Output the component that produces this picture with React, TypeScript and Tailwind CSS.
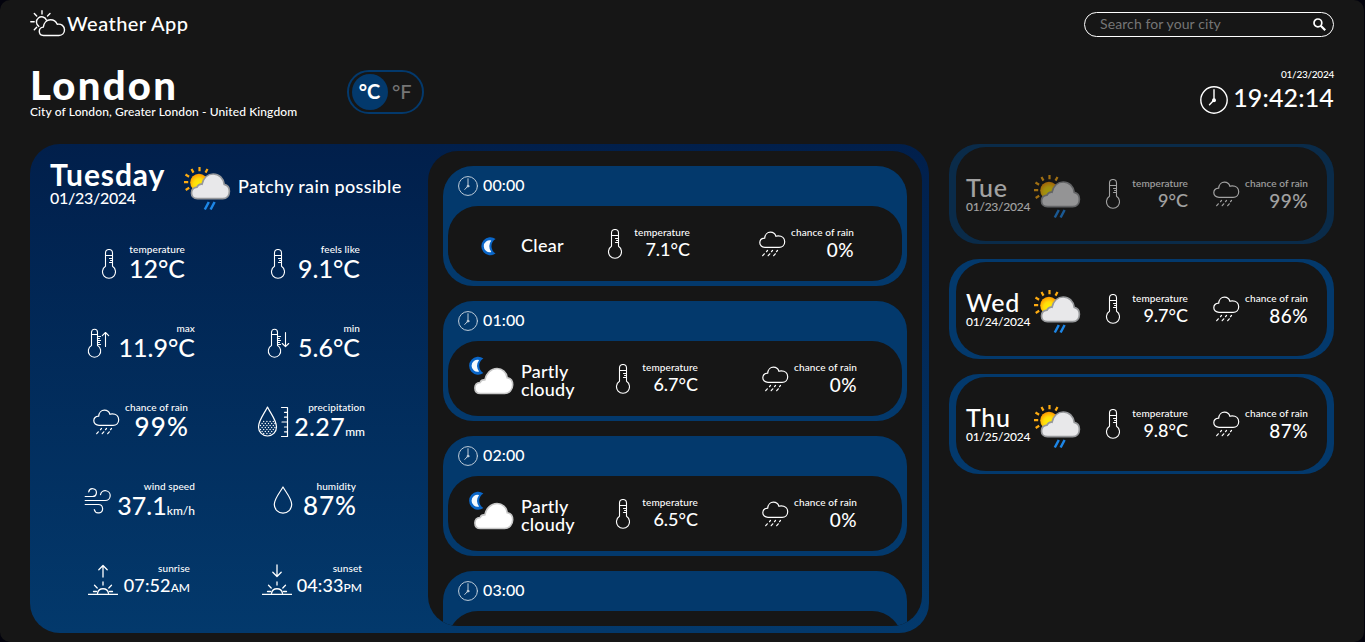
import React from "react";

type P = { className?: string };
const line = { fill: "none", stroke: "currentColor", strokeLinecap: "round", strokeLinejoin: "round" } as const;

function Logo() {
  return (
    <svg className="h-[28px] w-[36px] shrink-0" viewBox="0 0 36 28" {...line} strokeWidth={1.4}>
      <path d="M13.500 25.500c-2.600 0-4.200-1.900-4.200-4.200 0-2.300 1.500-4 4-4.200 0.500-4.200 3.300-7.300 7.200-7.300 3.200 0 5.600 1.800 6.700 4.400 4.200-0.700 7.300 2 7.300 5.600 0 3.300-2.300 5.700-5.500 5.700z" />
      <path d="M8.800 16.400a5.200 5.200 0 1 1 7.700-6.200" />
      <path d="M12 0.800v3.200M4.300 3.500l2.400 2.500M20 3.500l-2.500 2.500M0.800 11.800h3.400M4.300 19.700l2.400-2.500" />
    </svg>
  );
}

function Clock({ className = "", w = 1.4 }: P & { w?: number }) {
  return (
    <svg className={`shrink-0 ${className}`} viewBox="0 0 28 28" {...line} strokeWidth={w}>
      <circle cx="14" cy="14" r="13.200" />
      <path d="M14 3.800V14l-4.500 4.800" />
      <circle cx="14" cy="14.200" r="1.300" fill="currentColor" />
    </svg>
  );
}

function Thermometer({ className = "" }: P) {
  return (
    <svg className={`h-[31px] w-[15px] shrink-0 ${className}`} viewBox="0 0 15 31" {...line} strokeWidth={1.1}>
      <path d="M4.500 17.300V4a3.500 3.500 0 0 1 7 0v13.300a6.500 6.500 0 1 1-7 0z" />
      <path d="M4.700 6.500h6.600M8.500 9.500h3M9.500 11.500h2M8.500 13.500h3" />
    </svg>
  );
}

function ThermometerArrow({ down }: { down?: boolean }) {
  return (
    <svg className="h-[31px] w-[23px] shrink-0" viewBox="0 0 23 31" {...line} strokeWidth={1.1}>
      <path d="M4.500 17.600V4.200a3 3 0 0 1 6 0v13.400a6.200 6.200 0 1 1-6 0z" />
      <path d="M4.700 6.500h5.600M10.500 8.500h3M10.500 10.500h2M10.500 12.500h3M10.500 14.500h2M10.500 16.500h3" />
      {down ? <path d="M18.500 4.500v14M15.300 15.500l3.200 3.200 3.200-3.200" /> : <path d="M18.500 4.500v14M15.300 7.700l3.200-3.200 3.200 3.200" />}
    </svg>
  );
}

function RainCloud({ className = "" }: P) {
  return (
    <svg className={`h-[26px] w-[27px] shrink-0 ${className}`} viewBox="0 0 27 26" {...line} strokeWidth={1.2}>
      <path d="M6 16.300c-3 0-5.200-2-5.200-4.500 0-2.700 2-4.500 4.900-4.700C6 3.700 8.300 1.200 11.400 1.200c2.800 0 4.800 1.600 5.500 4.100 0.700-0.400 1.500-0.500 2.300-0.500 3.800 0 6.500 2.400 6.500 5.900 0 3.300-2.400 5.600-5.600 5.600z" />
      <path d="M8.500 19.500l-1 1.200M13.500 19.500l-1 1.200M18.500 19.500l-1 1.200M5.300 22.800l-1.600 1.900M10.800 22.800l-1.600 1.900M16.300 22.800l-1.600 1.900" />
    </svg>
  );
}

function DropRuler() {
  const dots: [number, number][] = [];
  for (let r = 0; r < 7; r++)
    for (let c = 0; c < 6; c++) {
      const x = 3 + c * 3.2 + (r % 2 ? 1.6 : 0);
      const y = 15.5 + r * 2;
      if (Math.hypot(x - 10, y - 20.5) < 8) dots.push([x, y]);
    }
  return (
    <svg className="h-[32px] w-[32px] shrink-0" viewBox="0 0 32 32" {...line} strokeWidth={1.2}>
      <path d="M10.500 1c2.500 5.500 9 13 9 20a9 9 0 0 1-18 0C1.500 14 8 6.500 10.500 1z" />
      {dots.map(([x, y], i) => <circle key={i} cx={x + 0.5} cy={y} r="0.7" fill="currentColor" stroke="none" />)}
      <path d="M24.500 1.500h6v29h-6M27.500 6.300h3M27.500 11.200h3M25 16h5.500M27.500 21h3M27.500 25.800h3" />
    </svg>
  );
}

function Wind() {
  return (
    <svg className="h-[27px] w-[27px] shrink-0" viewBox="0 0 27 27" {...line} strokeWidth={1.2}>
      <path d="M1.200 9.500h7.300a3.900 3.900 0 1 0-3.800-4.700" />
      <path d="M1.200 13.500h20a4.900 4.900 0 1 0-4.700-5.900" />
      <path d="M1.200 17.500h13.100a4.200 4.200 0 1 1-4 5.200" />
    </svg>
  );
}

function Drop() {
  return (
    <svg className="h-[28px] w-[20px] shrink-0" viewBox="0 0 20 28" {...line} strokeWidth={1.2}>
      <path d="M10 1c2.500 4.700 8.700 11.500 8.700 17.500a8.700 8.700 0 0 1-17.400 0C1.300 12.500 7.500 5.700 10 1z" />
    </svg>
  );
}

function Horizon({ down }: { down?: boolean }) {
  return (
    <svg className="h-[31px] w-[30px] shrink-0" viewBox="0 0 30 31" {...line} strokeWidth={1.3}>
      {down ? <path d="M15 1v11M10.800 8.300l4.200 4.200 4.200-4.200" /> : <path d="M15 1.500v11.500M10.800 5.700L15 1.500l4.200 4.200" />}
      <path d="M15 18v3M6.500 21.300l2.700 2.700M23.500 21.300L20.800 24M5.500 27.500h3M21.500 27.500h3M9.500 29.300a5.600 5.600 0 0 1 11 0" />
      <path d="M0.500 30.300h29" />
    </svg>
  );
}

function SunRain() {
  return (
    <svg className="h-[45px] w-[48px] shrink-0" viewBox="0 0 48 45">
      <defs>
        <radialGradient id="sun" cx="0.5" cy="0.6" r="0.55">
          <stop offset="0" stopColor="#fff200" />
          <stop offset="0.55" stopColor="#ffdc0c" />
          <stop offset="1" stopColor="#ff9f00" />
        </radialGradient>
      </defs>
      <g stroke="#fdab11" strokeWidth="2.2">
        <path d="M16.500 1v4.200M8.500 3l2 3.600M24.500 3l-2 3.600M2.500 8.500l3.600 2.200M1 16.200h4.200M2.700 24l3.500-2.200" />
      </g>
      <circle cx="16" cy="16.500" r="8.800" fill="url(#sun)" />
      <path
        d="M14.500 32.700c-4 0-6-2.600-6-5.700 0-3.200 2.300-5.500 5.500-5.800 0.800-2 2.700-3.300 5-3 1.400-6 5.700-10.200 11.200-10.200 5.900 0 10.300 4.400 11 10.400 3.500 0.700 5.200 3.400 5.200 6.900 0 4.300-2.700 7.400-6.700 7.400z"
        fill="#e8e8ea" stroke="#96989b" strokeWidth="1.700"
      />
      <path d="M25.800 36l-4 7.500M31.600 36l-4 7.500" stroke="#1d86e6" strokeWidth="2.500" />
    </svg>
  );
}

function MoonShape({ x, y }: { x: number; y: number }) {
  return (
    <g transform={`translate(${x} ${y})`}>
      <path d="M14.600 1.700A9 9 0 1 0 14.600 16.300A8.500 8.500 0 0 1 14.600 1.700z" fill="#0a66c8" />
      <path d="M10.300 3.200a6 6 0 1 0 0 11.600A10 10 0 0 1 10.300 3.200z" fill="#f4faff" />
    </g>
  );
}

function Moon() {
  return (
    <svg className="h-[45px] w-[48px] shrink-0" viewBox="0 0 48 45">
      <MoonShape x={13} y={16.3} />
    </svg>
  );
}

function MoonCloud() {
  return (
    <svg className="h-[45px] w-[48px] shrink-0" viewBox="0 0 48 45">
      <MoonShape x={0.8} y={0.8} />
      <path
        d="M12.500 37.500c-3.700 0-5.600-2.500-5.600-5.500 0-3.100 2.200-5.300 5.300-5.500 0.600-1.900 2.500-2.900 4.600-2.600C18 17.500 22.800 12.500 29 12.500c5.400 0 9.600 3.800 10.200 9.200 3.500 0.600 5.500 3.500 5.500 7.100 0 5-3.500 8.700-8 8.700z"
        fill="#ffffff" stroke="#c8c8c8" strokeWidth="1.600"
      />
    </svg>
  );
}

function Search() {
  return (
    <svg className="h-[13px] w-[13px] shrink-0" viewBox="0 0 13 13" fill="none" stroke="white" strokeWidth="1.7">
      <circle cx="4.900" cy="4.900" r="3.900" />
      <path d="M7.700 7.700l4.500 4.500" strokeWidth="2.2" />
    </svg>
  );
}

function Metric(p: { icon: React.ReactNode; label: string; value: string; unit?: string; cell: string; text: string; size?: string }) {
  return (
    <div className={`flex h-[79px] items-start ${p.cell}`}>
      {p.icon}
      <div className={`flex flex-col items-end whitespace-nowrap ${p.text}`}>
        <div className="text-[10px] leading-[12px] tracking-[0.1px]">{p.label}</div>
        <div className={p.size ?? "text-[25px] leading-[27px]"}>
          {p.value}
          {p.unit && <span className="text-[12px] tracking-normal">{p.unit}</span>}
        </div>
      </div>
    </div>
  );
}

function SmallMetric({ label, value, size }: { label: string; value: string; size: string }) {
  return (
    <div className="flex flex-col items-end pb-[1px] whitespace-nowrap">
      <div className="text-[10px] leading-[13px] tracking-[0.1px]">{label}</div>
      <div className={`leading-[21px] ${size}`}>{value}</div>
    </div>
  );
}

const tempSize = "text-[18px]";
const rainSize = "text-[19px] tracking-[0.5px]";

const hours = [
  { time: "00:00", text: "Clear", temp: "7.1°C", clear: true },
  { time: "01:00", text: "Partly cloudy", temp: "6.7°C" },
  { time: "02:00", text: "Partly cloudy", temp: "6.5°C" },
  { time: "03:00", text: "Partly cloudy", temp: "6.3°C" },
];

function Hour({ h }: { h: (typeof hours)[number] }) {
  return (
    <div className="h-[120px] shrink-0 rounded-[30px] bg-[#03396c] px-[5px] pb-[5px]">
      <div className="flex h-[40px] items-center pb-[1px] pl-[10px]">
        <Clock className="h-[20px] w-[20px] opacity-75" w={1.4} />
        <div className="ml-[5px] pb-[1px] text-[16px] leading-[20px] tracking-[0.1px]">{h.time}</div>
      </div>
      <div className="flex h-[75px] items-center rounded-[30px] bg-[#161616] pl-[20px]">
        {h.clear ? <Moon /> : <MoonCloud />}
        <div className={h.clear ? "ml-[5px] w-[86px] pt-[3px] text-[18px] leading-[18px] tracking-[0.3px]" : "ml-[5px] w-[94px] pt-[2px] pr-[30px] text-[18px] leading-[18px] tracking-[0.2px]"}>{h.text}</div>
        <Thermometer className="mt-[1px]" />
        <div className="flex w-[68px] justify-end"><SmallMetric label="temperature" value={h.temp} size={tempSize} /></div>
        <RainCloud className={h.clear ? "ml-[69px]" : "ml-[64px]"} />
        <div className="flex w-[68px] justify-end"><SmallMetric label="chance of rain" value="0%" size={rainSize} /></div>
      </div>
    </div>
  );
}

const days = [
  { day: "Tue", date: "01/23/2024", temp: "9°C", rain: "99%", past: true },
  { day: "Wed", date: "01/24/2024", temp: "9.7°C", rain: "86%" },
  { day: "Thu", date: "01/25/2024", temp: "9.8°C", rain: "87%" },
];

function Day({ d }: { d: (typeof days)[number] }) {
  return (
    <div className={`h-[100px] rounded-[30px] bg-[#03396c] px-[7px] py-[3px] ${d.past ? "opacity-60" : ""}`}>
      <div className="flex h-[94px] items-center rounded-[30px] bg-[#161616] pl-[10px]">
        <div className="w-[67px] pb-[2px]">
          <div className="text-[25px] leading-[26px] tracking-[0.7px]">{d.day}</div>
          <div className="text-[12px] leading-[13px] tracking-[-0.25px]">{d.date}</div>
        </div>
        <div className="pt-[4px]"><SunRain /></div>
        <Thermometer className="ml-[24px]" />
        <div className="flex w-[68px] justify-end"><SmallMetric label="temperature" value={d.temp} size={tempSize} /></div>
        <RainCloud className="ml-[25px]" />
        <div className="flex w-[68px] justify-end"><SmallMetric label="chance of rain" value={d.rain} size={rainSize} /></div>
      </div>
    </div>
  );
}

export default function App() {
  return (
    <div className="h-[642px] w-[1365px] overflow-hidden bg-[#03030d] font-['Lato','Liberation_Sans',sans-serif] font-medium text-white">
      <div className="h-[642px] w-[1364px] rounded-[10px] bg-[#161616] px-[30px]">
        <header className="flex h-[49px] items-center justify-between">
          <div className="flex items-center pb-[2px]">
            <Logo />
            <h1 className="ml-[1px] pb-[2px] text-[20px] leading-[24px] tracking-[0.45px]">Weather App</h1>
          </div>
          <div className="flex h-[25px] w-[250px] items-center justify-between rounded-full border border-white pr-[7px] pl-[15px]">
            <span className="pb-[2px] text-[14px] leading-[18px] font-normal tracking-[0.1px] text-[#757575]">Search for your city</span>
            <Search />
          </div>
        </header>

        <section className="flex h-[95px] items-start justify-between pt-[15px]">
          <div className="flex">
            <div className="w-[317px] pt-[1px] whitespace-nowrap">
              <h2 className="text-[40px] leading-[41px] font-black tracking-[2.3px]">London</h2>
              <p className="mt-[-1px] text-[12px] leading-[13px] tracking-[0.1px]">City of London, Greater London - United Kingdom</p>
            </div>
            <div className="mt-[6px] flex h-[44px] w-[77px] items-center rounded-full border-2 border-[#03396c] pl-[3px] text-[20px] leading-[24px]">
              <span className="flex h-[36px] w-[36px] items-center justify-center rounded-full bg-[#03396c] pr-[1px] pb-[2px] font-bold">°C</span>
              <span className="ml-[4px] pb-[2px] text-[#757575]">°F</span>
            </div>
          </div>
          <div className="flex flex-col items-end pt-[4px]">
            <div className="text-[10px] leading-[13px] tracking-[-0.25px]">01/23/2024</div>
            <div className="mt-[5px] flex h-[28px] items-center">
              <Clock className="h-[28px] w-[28px]" />
              <div className="ml-[5px] pb-[6px] text-[25px] leading-[28px] tracking-[0.15px]">19:42:14</div>
            </div>
          </div>
        </section>

        <main className="flex gap-[20px]">
          <div className="flex h-[489px] w-[899px] rounded-[30px] bg-linear-to-b from-[#011f4b] to-[#03396c] p-[7px] pl-0">
            <div className="w-[398px] shrink-0">
              <div className="flex h-[91px] pl-[20px]">
                <div className="w-[133px] pt-[7px]">
                  <h3 className="text-[30px] leading-[32px] font-bold tracking-[0.9px]">Tuesday</h3>
                  <p className="text-[16px] leading-[16px] tracking-[-0.3px]">01/23/2024</p>
                </div>
                <div className="pt-[15px]"><SunRain /></div>
                <p className="ml-[7px] pt-[23px] text-[18px] leading-[24px] tracking-[0.35px]">Patchy rain possible</p>
              </div>
              <div className="flex">
                <div className="w-[200px]">
                  <Metric icon={<Thermometer className="mt-[6px]" />} label="temperature" value="12°C" cell="pl-[71px] pt-[1px]" text="w-[69px]" />
                  <Metric icon={<div className="mt-[6px]"><ThermometerArrow /></div>} label="max" value="11.9°C" cell="pl-[57px] pt-[1px]" text="w-[85px]" />
                  <Metric icon={<RainCloud className="mt-[8px]" />} label="chance of rain" value="99%" cell="pl-[63px] pt-[1px]" text="w-[68px]" size="mr-[-1px] text-[26px] leading-[27px] tracking-[1.1px]" />
                  <Metric icon={<div className="mt-[7px]"><Wind /></div>} label="wind speed" value="37.1" unit="km/h" cell="pl-[54px] pt-[1px]" text="w-[84px]" />
                  <Metric icon={<div className="mt-[2px]"><Horizon /></div>} label="sunrise" value="07:52" unit="AM" cell="pl-[58px] pt-[4px]" text="w-[72px]" size="text-[18px] leading-[23px] tracking-[0.1px]" />
                </div>
                <div className="w-[198px]">
                  <Metric icon={<Thermometer className="mt-[6px]" />} label="feels like" value="9.1°C" cell="pl-[40px] pt-[1px]" text="w-[75px]" />
                  <Metric icon={<div className="mt-[6px]"><ThermometerArrow down /></div>} label="min" value="5.6°C" cell="pl-[37px] pt-[1px]" text="w-[70px]" />
                  <Metric icon={<div className="mt-[5px]"><DropRuler /></div>} label="precipitation" value="2.27" unit="mm" cell="pl-[27px] pt-[1px]" text="w-[76px]" size="text-[25px] leading-[27px] tracking-[0.4px]" />
                  <Metric icon={<div className="mt-[6px]"><Drop /></div>} label="humidity" value="87%" cell="pl-[43px] pt-[1px]" text="w-[63px]" size="mr-[-1px] text-[26px] leading-[27px] tracking-[1px]" />
                  <Metric icon={<div className="mt-[2px]"><Horizon down /></div>} label="sunset" value="04:33" unit="PM" cell="pl-[32px] pt-[4px]" text="w-[70px]" size="text-[18px] leading-[23px] tracking-[0.1px]" />
                </div>
              </div>
            </div>
            <div className="flex h-[475px] w-[494px] flex-col gap-[15px] overflow-hidden rounded-[30px] bg-[#161616] p-[15px]">
              {hours.map((h) => <Hour key={h.time} h={h} />)}
            </div>
          </div>
          <aside className="flex w-[385px] flex-col gap-[15px]">
            {days.map((d) => <Day key={d.day} d={d} />)}
          </aside>
        </main>
      </div>
    </div>
  );
}
